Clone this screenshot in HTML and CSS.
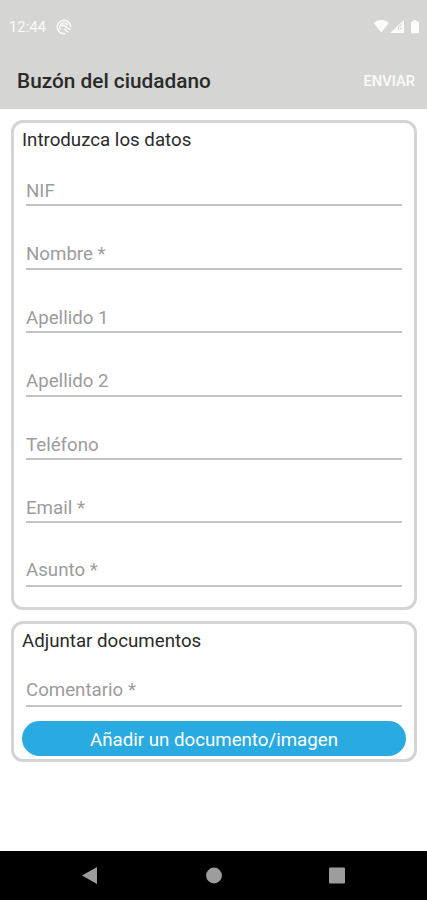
FILE: index.html
```html
<!DOCTYPE html>
<html lang="es">
<head>
<meta charset="utf-8">
<meta name="viewport" content="width=device-width, initial-scale=1">
<title>Buzón del ciudadano</title>
<link rel="stylesheet" href="styles.css">
</head>
<body>
<header class="top">
  <div class="status">
    <span class="clock">12:44</span>
    <svg class="notice" width="16" height="16" viewBox="0 0 16 16" fill="none" stroke="currentColor">
      <path d="M9.500 14.500A6.700 6.700 0 1 1 14.600 8.500M4.500 10.800A4.300 4.300 0 0 1 11.800 6M5.500 7.500Q8 5 9.500 7.500T14.500 10.500M8 10L12.500 13.500" stroke-width="1.500"/>
    </svg>
    <svg class="signals" width="48" height="16" viewBox="0 0 48 16" fill="currentColor">
      <path d="M0.500 4Q8.500-2.500 16 4L8.300 13.500Z"/>
      <path d="M17 14 31 1V14Z"/>
      <path d="M25.500 11V8.500L28.500 5.500M27 9.500H29" fill="none" stroke="#d5d5d3" stroke-width="1.200"/>
      <path d="M39 2.500H40.500V1H43.500V2.500H45Q46 2.500 46 3.500V13Q46 14.300 45 14.300H39Q38 14.300 38 13V3.500Q38 2.500 39 2.500Z"/>
    </svg>
  </div>
  <div class="bar">
    <h1 class="title">Buzón del ciudadano</h1>
    <span class="send">ENVIAR</span>
  </div>
</header>
<main class="content">
  <section class="card data">
    <h2 class="heading">Introduzca los datos</h2>
    <div class="field"><span>NIF</span></div>
    <div class="field"><span>Nombre *</span></div>
    <div class="field"><span>Apellido 1</span></div>
    <div class="field"><span>Apellido 2</span></div>
    <div class="field"><span>Teléfono</span></div>
    <div class="field"><span>Email *</span></div>
    <div class="field last"><span>Asunto *</span></div>
  </section>
  <section class="card files">
    <h2 class="heading">Adjuntar documentos</h2>
    <div class="field comment"><span>Comentario *</span></div>
    <div class="button"><span>Añadir un documento/imagen</span></div>
  </section>
</main>
<nav class="nav">
  <svg width="427" height="49" viewBox="0 0 427 49" fill="#9d9d9d">
    <path d="M82 24.500 97 16V33Z"/>
    <circle cx="214" cy="24.500" r="7.900"/>
    <rect x="329" y="16.500" width="16" height="16" rx="1"/>
  </svg>
</nav>
</body>
</html>
```
FILE: styles.css
```css
* { box-sizing: border-box; }
body {
  margin: 0;
  width: 427px;
  height: 900px;
  display: flex;
  flex-direction: column;
  overflow: hidden;
  background: #fff;
  color: #2b2b2b;
  font-family: Roboto, sans-serif;
}
.top { height: 109px; background: #d5d5d3; color: #fcfcfb; }
.status { height: 53px; padding: 1px 6px 0 9px; display: flex; align-items: center; }
.clock { font-size: 14.500px; letter-spacing: 0.2px; }
.notice { margin-left: 10px; }
.signals { margin-left: auto; }
.bar { height: 56px; padding: 0 12px 0 17px; display: flex; align-items: center; justify-content: space-between; }
.title { margin: 0; font-size: 20.800px; font-weight: 500; color: #2a2a2a; }
.send { font-size: 14.700px; font-weight: 500; }
.content { flex: 1; padding: 11px 10px 0 11px; }
.card { border: 3px solid #d4d4d3; border-radius: 12px; padding: 0 8px; }
.data { height: 490px; }
.files { height: 141px; margin-top: 11px; }
.heading { margin: 0; height: 20px; padding-top: 6px; line-height: 22px; font-size: 18.700px; font-weight: 400; white-space: nowrap; }
.field {
  height: 63.400px;
  margin: 0 4px;
  padding-bottom: 2.300px;
  display: flex;
  align-items: flex-end;
  border-bottom: 2px solid #c4c4c4;
  line-height: 22px;
  font-size: 18.700px;
  color: #9c9c9c;
}
.last { padding-bottom: 4px; }
.comment { height: 63px; padding-bottom: 4px; }
.button {
  height: 35px;
  margin-top: 14px;
  padding-top: 3px;
  display: flex;
  align-items: center;
  justify-content: center;
  border-radius: 18px;
  background: #29abe2;
  color: #fff;
  font-size: 18.700px;
}
.nav { height: 49px; background: #000; }
.nav svg { display: block; }
```
